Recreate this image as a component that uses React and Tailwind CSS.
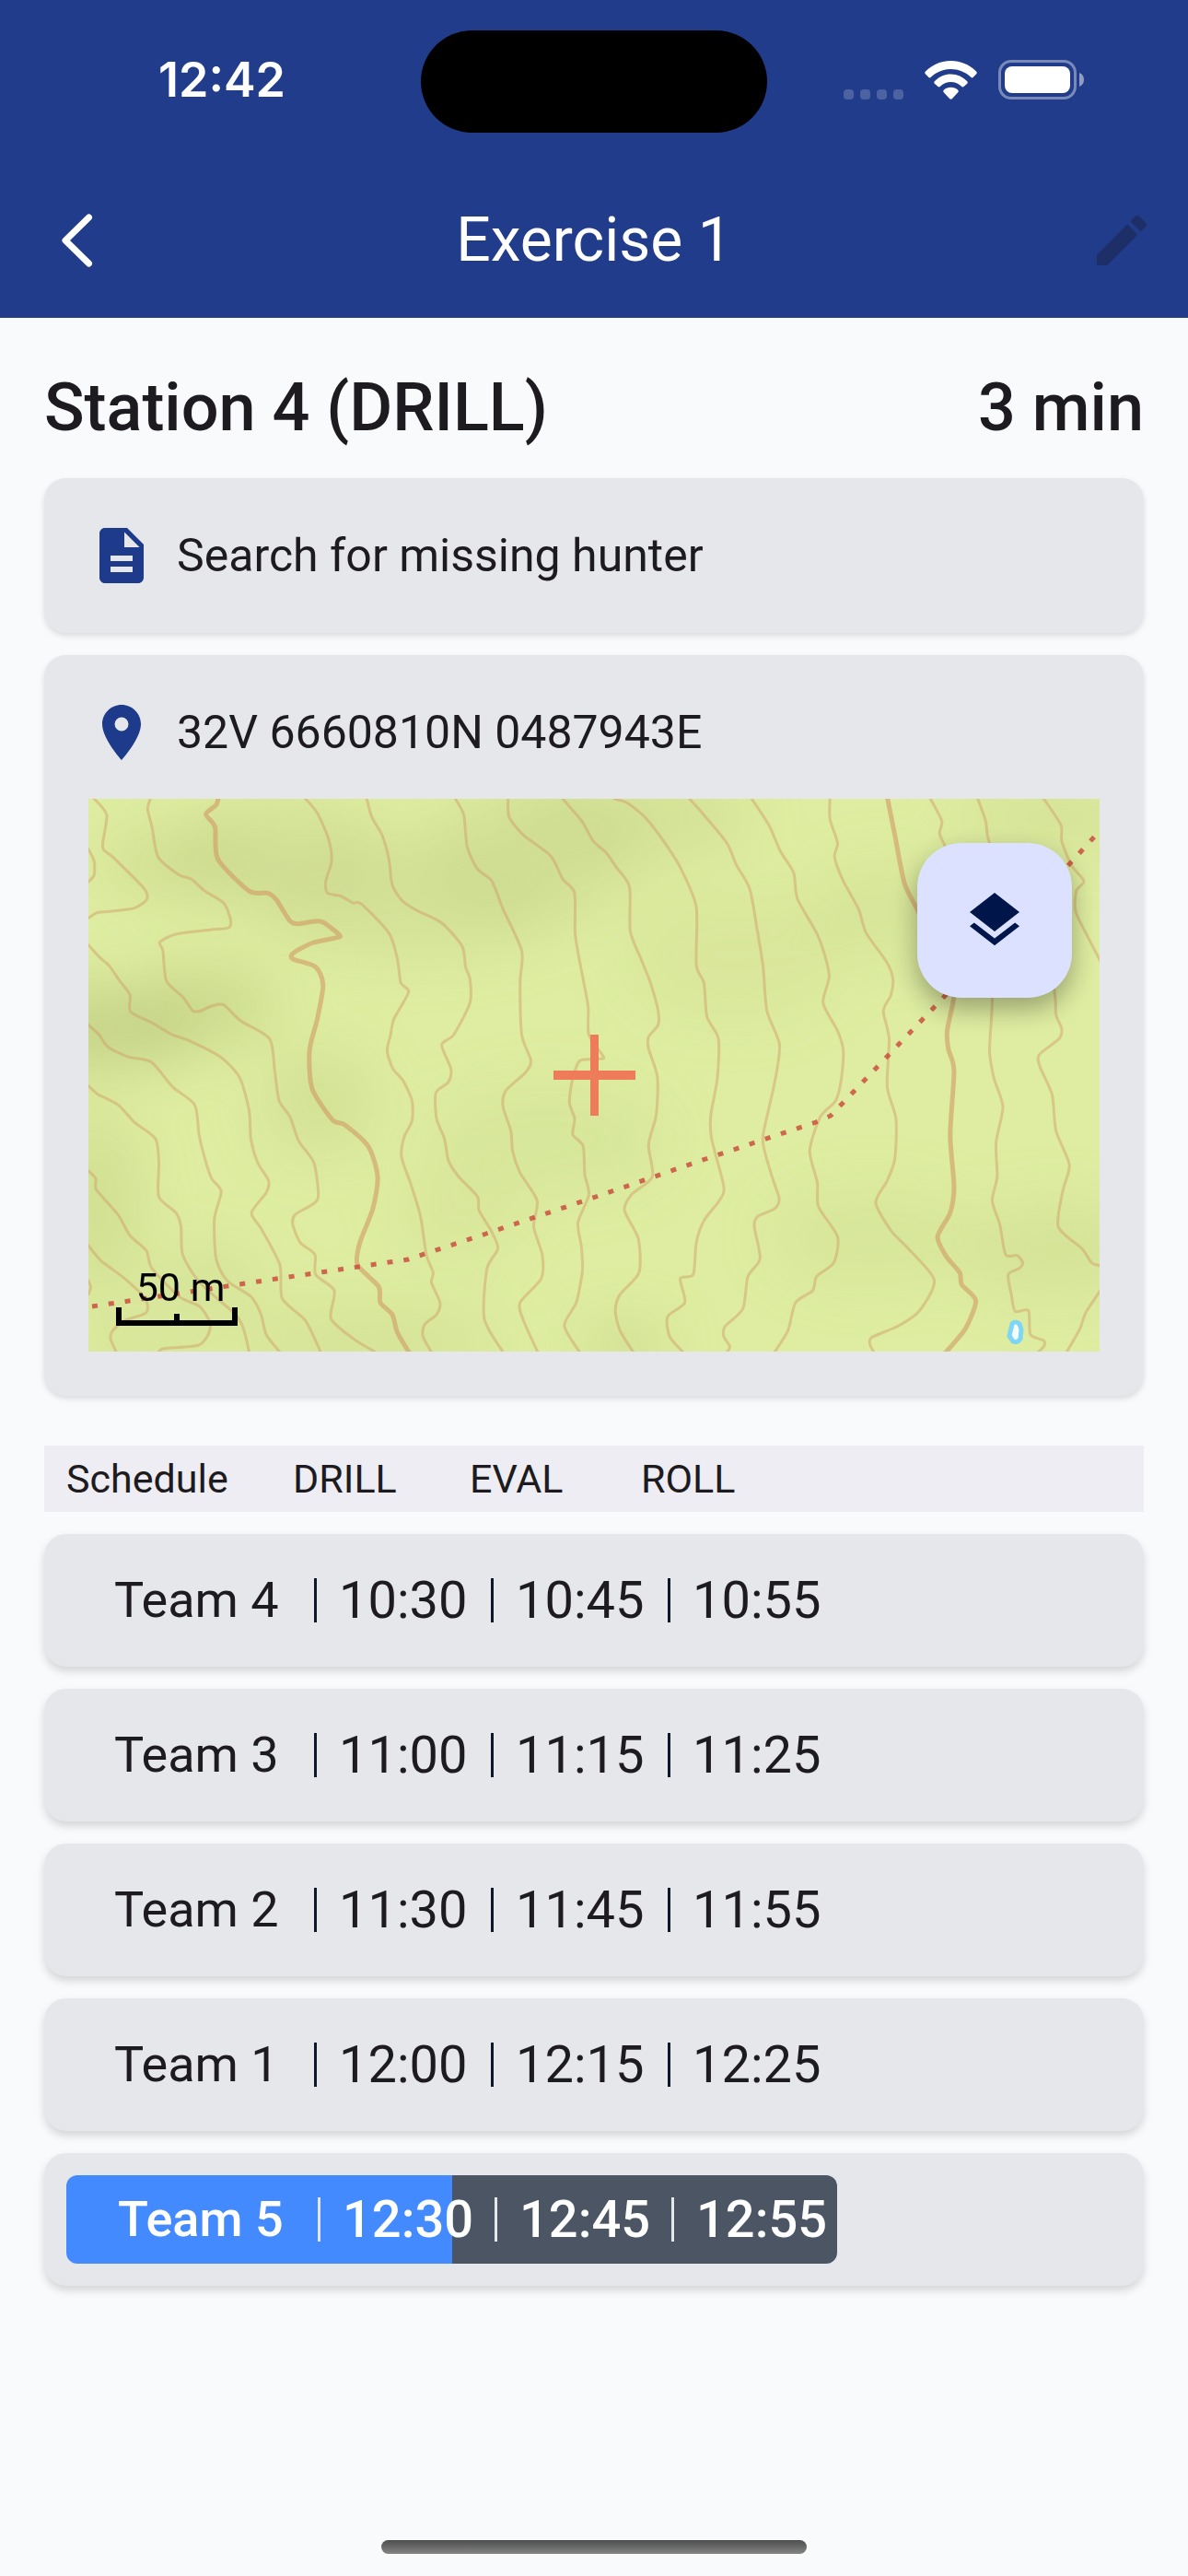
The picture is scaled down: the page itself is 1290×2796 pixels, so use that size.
import { MdDescription, MdEdit, MdLayers, MdLocationOn } from "react-icons/md";

const schedule = [
  { team: "Team 4", times: ["10:30", "10:45", "10:55"] },
  { team: "Team 3", times: ["11:00", "11:15", "11:25"] },
  { team: "Team 2", times: ["11:30", "11:45", "11:55"] },
  { team: "Team 1", times: ["12:00", "12:15", "12:25"] },
  { team: "Team 5", times: ["12:30", "12:45", "12:55"], progress: 50 },
];

// Contour lines, west half of the map.
const westContours = [
  "60,39 97,80 85,160 115,185 205,262 215,290 180,312 120,320 70,324 43,338",
  "43,165 60,195 60,230 43,247",
  "225,39 217,65 230,110 248,185 310,230 345,240 385,270 440,300 460,340 455,362 400,367 300,378 253,398 262,420 272,495 320,535 350,570 372,570 405,558 440,555 490,595 575,640 590,720 603,795 635,835 660,895 705,950 718,1030 705,1052 650,1080 643,1105 665,1150 708,1180 710,1230 765,1270 755,1340 820,1390 885,1424",
  "43,405 75,435 105,458 135,495 165,530 167,572 230,600 290,630 335,643 430,685 487,737 515,820 520,890 540,950 572,995 565,1025 522,1075 550,1115 605,1205 612,1290 680,1345 725,1424",
  "43,605 75,630 100,660 160,685 228,698 290,760 355,805 368,880 385,940 405,990 433,1022 413,1090 418,1190 450,1245 520,1285 550,1330 565,1380 605,1424",
  "43,757 70,778 130,805 180,850 240,890 250,950 250,1035 300,1075 315,1110 320,1180 370,1250 475,1330 500,1370 515,1424",
  "43,970 65,990 67,1018 130,1080 165,1132 213,1170 230,1215 310,1285 370,1310 400,1350 395,1380 365,1407 265,1415 250,1424",
  "43,1157 80,1195 150,1240 210,1290 213,1325 150,1345 115,1370 108,1390 125,1424",
  "43,1245 50,1262 43,1280",
  "680,39 715,75 748,140 757,195 740,245 745,275 785,283 820,300 845,303 925,375 950,440 960,500 983,523 940,590 930,630 920,670 937,715 967,745 993,795 993,845 970,885 962,935 990,1005 1018,1085 1035,1180 1055,1225 1050,1250 1075,1300 1065,1330 1030,1355 1025,1385 1050,1424",
  "860,39 875,85 905,130 925,190 935,255 965,295 1010,320 1080,350 1140,408 1150,460 1163,490 1163,550 1115,630 1080,655 1107,715 1100,748 1063,775 1065,840 1088,890 1100,945 1130,985 1185,1035 1190,1070 1225,1120 1245,1165 1213,1215 1205,1340 1260,1424",
  "1120,39 1145,80 1155,160 1185,215 1227,245 1260,315 1315,420 1310,500 1315,630 1342,695 1325,725 1268,770 1260,810 1283,870 1288,920 1310,975 1360,1045 1350,1110 1375,1180 1372,1240 1310,1300 1320,1345 1362,1424",
  "1275,39 1278,85 1320,130 1400,182 1435,240 1470,275 1472,380 1495,490 1510,560 1512,630 1555,685 1540,690 1485,695 1463,745 1455,800 1470,840 1465,880 1495,908 1500,980 1512,1030 1480,1100 1490,1160 1493,1220 1475,1300 1440,1358 1485,1424",
];
const westIndexContour =
  "425,35 418,55 388,78 415,110 423,190 515,270 570,275 595,292 635,345 660,352 725,346 780,380 770,387 700,400 645,425 643,440 710,460 732,505 715,590 692,670 700,765 760,843 795,855 865,910 892,985 878,1065 840,1150 833,1205 895,1260 900,1300 935,1330 950,1375 985,1426";

// Contour lines, east half of the map.
const eastContours = [
  "-70,39 -20,95 10,145 45,175 70,210 105,260 107,370 135,440 160,500 180,570 180,605 155,635 155,665 178,735 175,830 155,905 165,985 110,1030 92,1070 128,1140 130,1225 80,1280 68,1320 80,1370 115,1424",
  "65,39 100,50 150,90 205,160 240,215 280,310 280,455 300,500 308,585 338,640 335,740 318,830 320,890 352,1010 340,1045 300,1095 280,1150 272,1230 238,1240 250,1300 205,1335 210,1385 245,1424",
  "262,39 300,80 360,150 385,205 420,265 440,370 455,460 465,570 498,655 485,750 455,880 460,925 480,990 497,1040 485,1065 440,1085 432,1110 447,1190 415,1235 402,1315 355,1360 352,1385 368,1410 360,1424",
  "425,39 470,105 500,170 535,225 545,290 600,385 628,480 612,550 650,620 665,670 660,740 645,795 605,835 577,920 597,1000 600,1060 650,1135 640,1200 595,1235 585,1270 540,1300 520,1370 485,1424",
  "630,39 630,90 650,150 642,185 665,245 705,315 725,375 780,450 795,490 790,530 770,570 785,640 780,760 803,840 800,940 780,995 750,1050 790,1120 830,1160 903,1243 865,1320 810,1358 740,1387 735,1405 745,1424",
  "893,39 923,95 917,125 930,155 980,260 1040,400 1055,537 1048,670 1060,740 1083,810 1065,900 1068,985 1055,1045 1075,1105 1090,1180 1120,1182 1135,1200 1125,1215 1097,1230 1105,1280 1115,1322 1150,1320 1155,1380 1190,1395 1190,1410 1175,1424",
  "1017,39 1038,95 1048,150 1120,300 1200,430 1220,537 1222,580 1237,615 1230,640 1178,680 1180,710 1212,780 1222,870 1257,955 1240,1020 1228,1110 1290,1165 1315,1200 1338,1208",
  "1190,39 1235,105 1237,145 1262,205 1295,245 1275,270 1273,320 1300,375 1338,445",
  "1338,1270 1300,1325 1285,1365 1250,1424",
];
const eastIndexContour =
  "780,35 800,130 825,250 858,315 900,400 955,500 953,545 937,620 940,665 955,720 945,880 955,1010 945,1075 912,1135 935,1185 970,1225 975,1255 1012,1295 985,1365 932,1426";

// Terrain shading: cx, cy, rx, ry, opacity.
const shade = [
  [10, 250, 110, 45, 0.7],
  [125, 225, 80, 45, 0.5],
  [100, 70, 90, 35, 0.4],
  [210, 60, 120, 60, 0.3],
  [350, 110, 170, 60, 0.3],
  [480, 60, 120, 70, 0.3],
  [250, 330, 60, 55, 0.32],
  [590, 20, 130, 45, 0.32],
  [700, 170, 120, 70, 0.16],
  [870, 120, 90, 50, 0.22],
  [1050, 20, 110, 40, 0.25],
  [500, 370, 130, 60, 0.18],
  [400, 450, 70, 50, 0.16],
  [10, 440, 45, 100, 0.4],
  [130, 520, 60, 30, 0.3],
  [60, 590, 80, 30, 0.25],
  [300, 590, 150, 40, 0.25],
  [582, 596, 45, 22, 0.55],
  [850, 475, 110, 50, 0.2],
  [1050, 490, 100, 50, 0.28],
];

function smooth(points) {
  const p = points.split(" ").map((s) => s.split(",").map(Number));
  let d = `M${p[0][0]} ${p[0][1]}`;
  for (let i = 0; i < p.length - 1; i++) {
    const a = p[i - 1] || p[i];
    const b = p[i];
    const c = p[i + 1];
    const e = p[i + 2] || c;
    d += `C${b[0] + (c[0] - a[0]) / 8} ${b[1] + (c[1] - a[1]) / 8} ${c[0] - (e[0] - b[0]) / 8} ${c[1] - (e[1] - b[1]) / 8} ${c[0]} ${c[1]}`;
  }
  return d;
}

function Contours({ lines, index, transform }) {
  return (
    <g transform={transform} fill="none" stroke="#d0935f" strokeLinecap="round" strokeLinejoin="round">
      {lines.map((line) => (
        <path key={line} d={smooth(line)} strokeWidth="3" strokeOpacity="0.42" vectorEffect="non-scaling-stroke" />
      ))}
      <path d={smooth(index)} strokeWidth="5" strokeOpacity="0.55" vectorEffect="non-scaling-stroke" />
    </g>
  );
}

function TopoMap() {
  return (
    <svg viewBox="0 0 1098 600" preserveAspectRatio="xMidYMid slice" className="block h-full w-full" role="img" aria-label="Topographic map">
      <defs>
        <filter id="relief" x="-50%" y="-50%" width="200%" height="200%">
          <feGaussianBlur stdDeviation="30" />
        </filter>
      </defs>
      <rect width="1098" height="600" fill="#deeda1" />
      <g filter="url(#relief)" fill="#becb80">
        {shade.map(([cx, cy, rx, ry, o]) => (
          <ellipse key={`${cx}-${cy}`} cx={cx} cy={cy} rx={rx} ry={ry} opacity={o} />
        ))}
      </g>
      <Contours lines={westContours} index={westIndexContour} transform="translate(-16 -17) scale(0.37 0.4337)" />
      <Contours lines={eastContours} index={eastIndexContour} transform="translate(544 -17) scale(0.4146 0.4337)" />
      <path
        d="M4 551 204 521 293 508 347 500 432 472 551 432 670 391 790 351 806 344 930 214 1066 70 1098 35"
        fill="none"
        stroke="#cb4338"
        strokeOpacity="0.8"
        strokeWidth="5"
        strokeDasharray="6 12"
      />
      <path d="M1003 570q3-4 8 0l2 6-1 10q-3 5-8 3l-4-6z" fill="#f2fcff" stroke="#7ed6f4" strokeWidth="5" />
      <path d="M545 256h9v39h40v10h-40v39h-9v-39h-40v-10h40z" fill="#ee7b59" />
    </svg>
  );
}

function StatusBar() {
  return (
    <div className="grid h-[177px] grid-cols-[minmax(0,1fr)_auto_minmax(0,1fr)] items-center">
      <div className="pb-1 pl-[172px] font-['Inter'] text-[52px] leading-none font-semibold">12:42</div>
      <div className="h-[111px] w-[376px] rounded-full bg-black" />
      <div className="flex items-end gap-[23px] pb-1 pl-[83px]">
        <div className="flex gap-[7px]">
          {[0, 1, 2, 3].map((i) => (
            <span key={i} className="size-[11px] rounded-[4px] bg-white/20" />
          ))}
        </div>
        <svg width="57" height="42" viewBox="0 0 57 42" fill="#fff" aria-label="Wi-Fi">
          <path d="M1 11.500C8.500 4 18 0 28.500 0S48.500 4 56 11.500Q57.500 13 56 14.500L52.500 18Q51.500 19 50 17.500C44 12 36.500 9 28.500 9S13 12 7 17.500Q5.500 19 4.500 18L1 14.500Q-.5 13 1 11.500Z" />
          <path d="M11 22C15.500 17.500 21.500 14.500 28.500 14.500S41.500 17.500 46 22Q47.500 23.500 46 25L42.500 28Q41.500 29 40 27.700C37 24.700 33 23 28.500 23S20 24.700 17 27.700Q15.500 29 14.500 28L11 25Q9.500 23.500 11 22Z" />
          <path d="M21 31.500C23 29.800 25.500 28.800 28.500 28.800S34 29.800 36 31.500Q37.500 33 36 34.500L30 41Q28.500 42.500 27 41L21 34.500Q19.500 33 21 31.500Z" />
        </svg>
        <svg width="93" height="43" viewBox="0 0 93 43" aria-label="Battery">
          <rect x="1.500" y="1.500" width="82" height="40" rx="12.500" fill="none" stroke="#fff" strokeOpacity="0.4" strokeWidth="3" />
          <rect x="7" y="7" width="71" height="29" rx="8" fill="#fff" />
          <path d="M88 14q5 2 5 7.500t-5 7.500z" fill="#fff" fillOpacity="0.5" />
        </svg>
      </div>
    </div>
  );
}

function InfoCard({ icon: Icon, text, children }) {
  return (
    <section className="rounded-3xl bg-gray-200 px-12 py-12 shadow-[0_3px_6px_rgba(0,0,0,0.13)]">
      <div className="flex items-center gap-6">
        <Icon className="size-[72px] text-[#1e3a8a]" />
        <p className="text-[50px] leading-[68px]">{text}</p>
      </div>
      {children}
    </section>
  );
}

function ScheduleRow({ team, times, progress }) {
  const active = progress !== undefined;
  return (
    <tr className="flex rounded-3xl bg-gray-200 p-6 shadow-[0_5px_10px_rgba(0,0,0,0.15)]">
      <td className="block">
        <div
          className={
            active
              ? "flex h-24 w-[837px] items-center rounded-xl pl-1 font-medium text-white"
              : "flex h-24 w-[837px] items-center"
          }
          style={
            active
              ? { background: `linear-gradient(to right, #448aff ${progress}%, #4b5563 ${progress}%)` }
              : undefined
          }
        >
          <span className="w-[269px] shrink-0 pl-[52px] text-[54px] leading-[72px] whitespace-nowrap">{team}</span>
          {times.map((time) => (
            <span key={time} className="flex w-48 shrink-0 items-center gap-6">
              <span className={active ? "h-12 w-[3px] bg-gray-200" : "h-12 w-[3px] bg-slate-900"} />
              <time className="text-[56px] leading-[72px]">{time}</time>
            </span>
          ))}
        </div>
      </td>
    </tr>
  );
}

export default function App() {
  return (
    <div className="flex min-h-screen flex-col bg-[#f9fafc] font-['Roboto',sans-serif] text-[#1d1b20]">
      <header className="bg-[#213c8a] text-white">
        <StatusBar />
        <div className="grid h-[168px] grid-cols-[1fr_auto_1fr] items-center">
          <button type="button" aria-label="Back" className="justify-self-start pl-[67px]">
            <svg width="34" height="58" viewBox="0 0 34 58" fill="none" stroke="#fff" strokeWidth="7" strokeLinecap="round" strokeLinejoin="round">
              <path d="M29.500 4 4 29l25.500 25" />
            </svg>
          </button>
          <h1 className="text-[66px] leading-none">Exercise 1</h1>
          <button type="button" aria-label="Edit" className="justify-self-end pr-9">
            <MdEdit className="size-[72px] text-[#1d2f66]" />
          </button>
        </div>
      </header>

      <main className="flex flex-col px-12 pt-12">
        <div className="mb-[26px] flex items-center justify-between text-[72px] leading-[100px] font-medium">
          <h2>Station 4 (DRILL)</h2>
          <p>3 min</p>
        </div>

        <div className="flex flex-col gap-6">
          <InfoCard icon={MdDescription} text="Search for missing hunter" />
          <InfoCard icon={MdLocationOn} text="32V 6660810N 0487943E">
            <div className="relative mt-9 h-[600px] overflow-hidden">
              <TopoMap />
              <button
                type="button"
                aria-label="Map layers"
                className="absolute top-12 right-[30px] flex size-[168px] items-center justify-center rounded-[48px] bg-[#dce1ff] shadow-[0_12px_28px_rgba(0,0,0,0.32)]"
              >
                <MdLayers className="size-[72px] text-[#00164b]" />
              </button>
              <div className="absolute bottom-7 left-[30px] w-[132px] text-black">
                <p className="pl-2 text-center text-[43px] leading-[44px]">50 m</p>
                <svg viewBox="0 0 132 20" className="block w-full" fill="none" stroke="currentColor" strokeWidth="6">
                  <path d="M3 0v17h126V0M66 7v10" />
                </svg>
              </div>
            </div>
          </InfoCard>
        </div>

        <table className="mt-[54px] flex flex-col">
          <thead className="block bg-[#eeedf3]">
            <tr className="flex h-[72px] items-center pl-6 text-left text-[43px]">
              <th className="w-[246px] font-normal">Schedule</th>
              <th className="w-48 font-normal">DRILL</th>
              <th className="w-[186px] font-normal">EVAL</th>
              <th className="font-normal">ROLL</th>
            </tr>
          </thead>
          <tbody className="mt-6 flex flex-col gap-6">
            {schedule.map((row) => (
              <ScheduleRow key={row.team} {...row} />
            ))}
          </tbody>
        </table>
      </main>

      <footer className="mt-auto flex justify-center pt-12 pb-6">
        <div className="h-[15px] w-[462px] rounded-full bg-linear-to-b from-[#4c4f4d] to-[#858585]" />
      </footer>
    </div>
  );
}
